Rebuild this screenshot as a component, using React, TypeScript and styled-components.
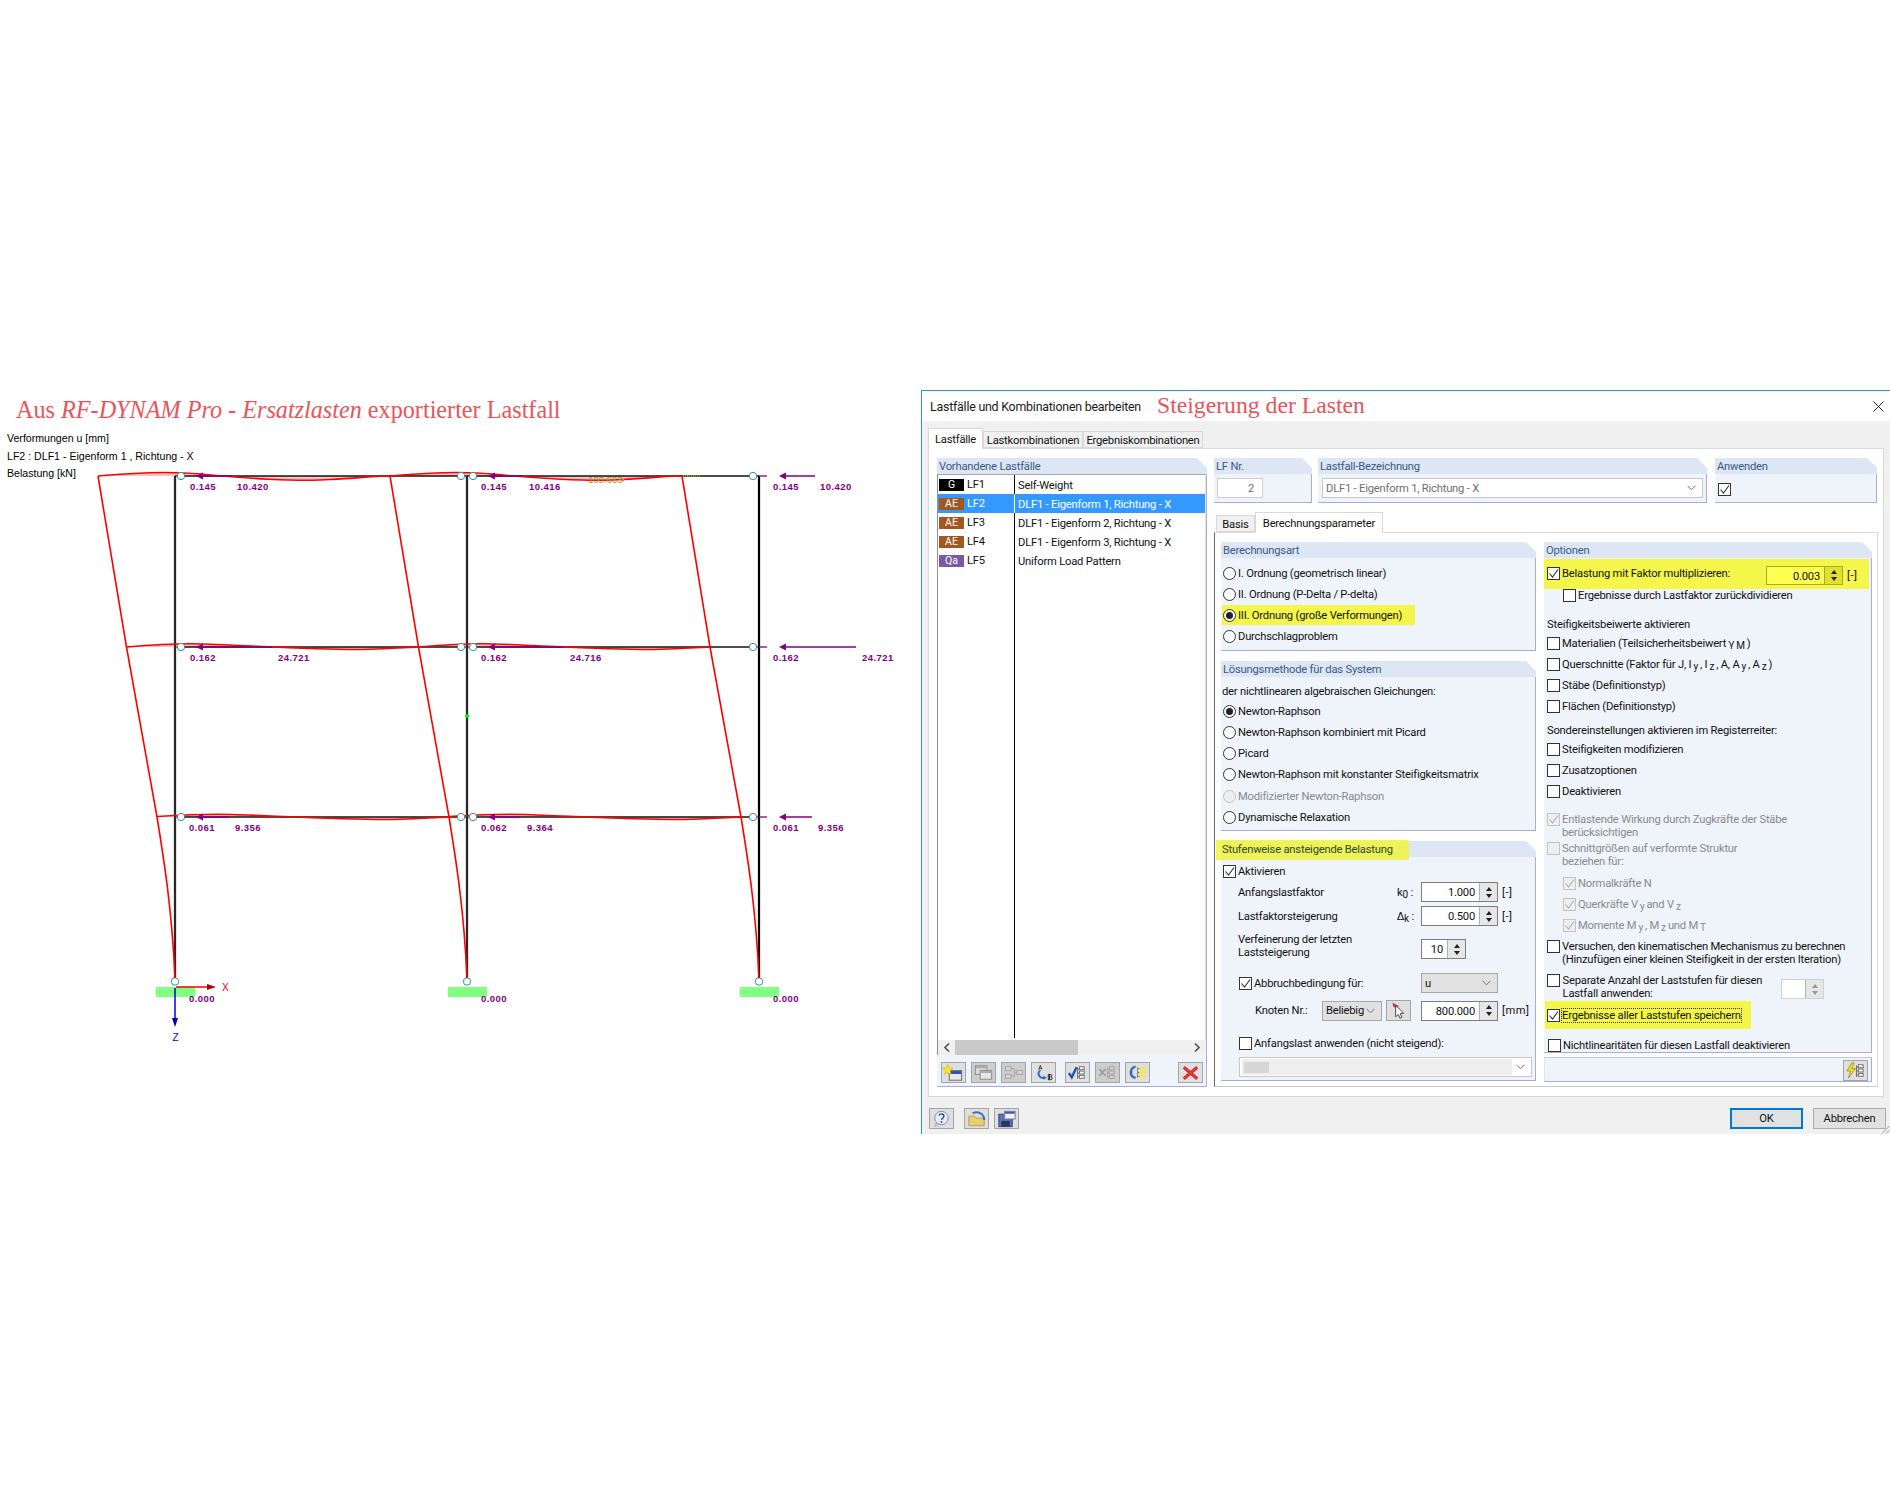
import React from "react";
import styled, { createGlobalStyle } from "styled-components";

const GlobalStyle = createGlobalStyle`
  html, body {
    margin: 0;
    padding: 0;
    background: #ffffff;
  }
`;

const Page = styled.div`
  width: 1890px;
  height: 1510px;
  padding-top: 390px;
  box-sizing: border-box;
  display: flex;
  overflow: hidden;
  background: #ffffff;
`;

/* left: the exported load case */
const DiagramPanel = styled.div`
  position: relative;
  width: 921px;
  height: 744px;
  flex: none;
`;

const DiagramTitle = styled.div`
  position: relative;
  font-family: "Liberation Serif", serif;
  font-size: 24.2px;
  line-height: 28px;
  color: #e8545a;
  padding: 6px 0 0 16px;
  i {
    font-style: italic;
  }
`;

const Legend = styled.div`
  position: relative;
  z-index: 1;
  margin-top: 6px;
  padding-left: 7px;
  font-family: "Liberation Sans", sans-serif;
  font-size: 10.6px;
  line-height: 17.5px;
  color: #000;
`;

const DiagramCanvas = styled.svg`
  position: absolute;
  left: 0;
  top: 0;
`;

/* right: the dialog */
const Dialog = styled.div`
  width: 969px;
  height: 744px;
  flex: none;
  box-sizing: border-box;
  border-top: 1px solid #2a9db5;
  border-left: 1px solid #2a9db5;
  background: #f0f0f0;
  display: flex;
  flex-direction: column;
  position: relative;
  overflow: hidden;
  font-family: "Roboto", "Liberation Sans", sans-serif;
  font-size: 11.2px;
  letter-spacing: -0.2px;
  color: #111;
`;

const TitleBar = styled.div`
  height: 30px;
  flex: none;
  background: #fff;
  display: flex;
  align-items: center;
  padding: 0 6px 0 8px;
`;

const DialogCaption = styled.div`
  font-size: 12.4px;
  letter-spacing: -0.22px;
  color: #1a1a1a;
`;

const CaptionNote = styled.div`
  font-family: "Liberation Serif", serif;
  font-size: 23.7px;
  letter-spacing: 0;
  color: #e8545a;
  margin: -1px 0 0 16px;
`;

const CloseButton = styled.div`
  margin-left: auto;
  display: flex;
`;

const TabRow = styled.div`
  height: 27px;
  flex: none;
  display: flex;
  align-items: flex-end;
  padding-left: 6px;
`;

const MainTab = styled.div<{ $active?: boolean; $w: number }>`
  width: ${(p) => p.$w}px;
  height: ${(p) => (p.$active ? 21 : 17)}px;
  box-sizing: border-box;
  border: 1px solid #d9d9d9;
  border-bottom: ${(p) => (p.$active ? "none" : "1px solid #d9d9d9")};
  background: ${(p) => (p.$active ? "#fff" : "#f0f0f0")};
  margin-bottom: ${(p) => (p.$active ? -1 : 0)}px;
  padding-top: ${(p) => (p.$active ? 0 : 1)}px;
  position: relative;
  z-index: ${(p) => (p.$active ? 2 : 0)};
  display: flex;
  align-items: center;
  justify-content: center;
  line-height: 13px;
`;

const TabPane = styled.div`
  width: 956px;
  height: 649px;
  flex: none;
  margin-left: 6px;
  box-sizing: border-box;
  background: #fff;
  border: 1px solid #d9d9d9;
  padding: 9px 0 0 8px;
  display: flex;
  gap: 7px;
`;

const GroupHeader = styled.div`
  height: 16px;
  flex: none;
  position: relative;
  background: #dce6f4;
  clip-path: polygon(0 0, calc(100% - 10px) 0, 100% 10px, 100% 100%, 0 100%);
  color: #3a5a82;
  padding-left: 2px;
  line-height: 18px;
  white-space: nowrap;
`;

const HeaderWrap = styled.div`
  position: relative;
  flex: none;
`;

const HeaderHighlight = styled.div`
  position: absolute;
  left: -5px;
  top: -1px;
  width: 193px;
  height: 20px;
  background: rgba(240, 245, 60, 0.85);
  color: #2d4a2a;
  line-height: 20px;
  padding-left: 6px;
  box-sizing: border-box;
  white-space: nowrap;
`;

const Group = styled.div<{ $w: number; $h: number; $ml?: number; $mt?: number }>`
  width: ${(p) => p.$w}px;
  height: ${(p) => p.$h}px;
  flex: none;
  margin-left: ${(p) => p.$ml ?? 0}px;
  margin-top: ${(p) => p.$mt ?? 0}px;
  display: flex;
  flex-direction: column;
`;

const GroupBody = styled.div<{ $pt?: number; $pl?: number }>`
  flex: 1;
  min-height: 0;
  box-sizing: border-box;
  background: #eff3fa;
  border-right: 1px solid #a9a9e6;
  border-bottom: 1px solid #a9a9e6;
  padding: ${(p) => p.$pt ?? 0}px 0 0 ${(p) => p.$pl ?? 2}px;
  display: flex;
  flex-direction: column;
`;

const CaseList = styled.div`
  height: 566px;
  flex: none;
  position: relative;
  box-sizing: border-box;
  background: #fff;
  border-left: 1px solid #8f8f8f;
  border-top: 1px solid #a8a8a8;
  border-right: 1px solid #dfe5f0;
  &::before {
    content: "";
    position: absolute;
    left: 76px;
    top: 0;
    bottom: 2px;
    width: 1px;
    background: #000;
  }
`;

const CaseRow = styled.div<{ $selected?: boolean }>`
  height: 19px;
  display: flex;
  align-items: center;
  position: relative;
  background: ${(p) => (p.$selected ? "#3399ff" : "transparent")};
  color: ${(p) => (p.$selected ? "#fff" : "#111")};
`;

const CaseKey = styled.div`
  width: 76px;
  flex: none;
  display: flex;
  align-items: center;
  gap: 3px;
  padding-left: 1px;
  box-sizing: border-box;
  line-height: 21px;
`;

const CaseName = styled.div<{ $selected?: boolean }>`
  padding-left: 3px;
  border-left: 1px solid ${(p) => (p.$selected ? "#fff" : "transparent")};
  height: 19px;
  line-height: 21px;
  white-space: nowrap;
`;

const Badge = styled.span<{ $bg: string }>`
  width: 25px;
  height: 12px;
  background: ${(p) => p.$bg};
  color: #fff;
  font-size: 10.5px;
  letter-spacing: 0;
  line-height: 12px;
  text-align: center;
`;

const ScrollBar = styled.div`
  height: 15px;
  flex: none;
  background: #f0f0f0;
  display: flex;
  align-items: center;
  border-left: 1px solid #8f8f8f;
  margin-right: 1px;
`;

const ScrollArrow = styled.div`
  width: 17px;
  flex: none;
  display: flex;
  justify-content: center;
`;

const ScrollThumb = styled.div`
  width: 123px;
  height: 15px;
  background: #c9c9c9;
`;

const ScrollEnd = styled.div`
  margin-left: auto;
  display: flex;
  width: 17px;
  justify-content: center;
`;

const Toolbar = styled.div`
  flex: 1;
  display: flex;
  align-items: flex-start;
  padding: 7px 0 0 4px;
`;

const ToolButton = styled.div<{ $ml?: number; $off?: boolean }>`
  width: 25px;
  height: 21px;
  flex: none;
  box-sizing: border-box;
  margin-left: ${(p) => p.$ml ?? 0}px;
  border: 1px solid #a4a4a4;
  background: ${(p) => (p.$off ? "#cdcdcd" : "#dfdfdf")};
  display: flex;
  align-items: center;
  justify-content: center;
`;

const RightColumn = styled.div`
  width: 664px;
  flex: none;
  display: flex;
  flex-direction: column;
`;

const HeadRow = styled.div`
  height: 45px;
  flex: none;
  display: flex;
`;

const ValueBox = styled.div<{ $w: number }>`
  width: ${(p) => p.$w}px;
  height: 20px;
  box-sizing: border-box;
  border: 1px solid #cfcfcf;
  background: #fff;
  color: #6f6f6f;
  padding: 0 8px 0 4px;
  display: flex;
  align-items: center;
  justify-content: flex-end;
`;

const ComboBox = styled.div<{ $w: number; $ml?: number; $mt?: number; $tone?: "flat" | "pale" }>`
  width: ${(p) => p.$w}px;
  height: 20px;
  box-sizing: border-box;
  margin-left: ${(p) => p.$ml ?? 0}px;
  margin-top: ${(p) => p.$mt ?? 0}px;
  border: 1px solid ${(p) => (p.$tone === "flat" ? "#a8a8a8" : "#c8c8c8")};
  background: ${(p) => (p.$tone === "flat" ? "#e1e1e1" : "#fff")};
  color: ${(p) => (p.$tone === "flat" ? "#111" : "#6f6f6f")};
  display: flex;
  align-items: center;
  padding: 0 6px 0 3px;
  white-space: nowrap;
  justify-content: space-between;
`;

const ComboFill = styled.div`
  width: 270px;
  height: 16px;
  background: #eeeeee;
  padding-left: 2px;
  box-sizing: border-box;
  display: flex;
  align-items: center;
  margin-left: -1px;
`;

const ComboSwatch = styled.div`
  width: 25px;
  height: 11px;
  background: #d6d6d6;
`;

const SubTabRow = styled.div`
  height: 29px;
  flex: none;
  display: flex;
  align-items: flex-end;
  padding-left: 2px;
`;

const SubPane = styled.div`
  height: 555px;
  flex: none;
  box-sizing: border-box;
  border: 1px solid #d9d9d9;
  border-left-color: #6a6a6a;
  border-bottom-color: #c8c8c8;
  padding: 9px 0 0 6px;
  display: flex;
  gap: 8px;
  background: #fff;
`;

const PaneColumn = styled.div<{ $w: number }>`
  width: ${(p) => p.$w}px;
  flex: none;
  display: flex;
  flex-direction: column;
`;

const Line = styled.div<{ $mt?: number; $indent?: number; $w?: number; $muted?: boolean }>`
  margin-top: ${(p) => p.$mt ?? 0}px;
  margin-left: ${(p) => p.$indent ?? 0}px;
  width: ${(p) => (p.$w ? `${p.$w}px` : "auto")};
  flex: none;
  display: flex;
  align-items: flex-start;
  gap: 2px;
  line-height: 13px;
  white-space: nowrap;
  color: ${(p) => (p.$muted ? "#8a8a8a" : "inherit")};
`;

const Focused = styled.span`
  outline: 1px dotted #222;
  outline-offset: 0;
`;

const Marker = styled.span<{ $dim?: boolean; $round?: boolean }>`
  width: 13px;
  height: 13px;
  flex: none;
  box-sizing: border-box;
  border: 1px solid ${(p) => (p.$dim ? "#c4c4c4" : "#333")};
  border-radius: ${(p) => (p.$round ? "50%" : "0")};
  background: ${(p) => (p.$dim ? "#eeeeee" : "#fff")};
  display: flex;
  align-items: center;
  justify-content: center;
`;

const Dot = styled.span`
  width: 7px;
  height: 7px;
  border-radius: 50%;
  background: #222;
`;

const Spot = styled.div<{ $w: number; $h: number; $pt: number; $mt?: number; $ml: number }>`
  width: ${(p) => p.$w}px;
  height: ${(p) => p.$h}px;
  flex: none;
  box-sizing: border-box;
  margin-top: ${(p) => p.$mt ?? 0}px;
  margin-left: ${(p) => p.$ml}px;
  padding: ${(p) => p.$pt}px 0 0 ${(p) => -p.$ml}px;
  background: #f4f74a;
  display: flex;
  align-items: flex-start;
`;

const FieldRow = styled.div<{ $cols: string; $mt: number; $pl: number; $h?: number }>`
  display: grid;
  grid-template-columns: ${(p) => p.$cols};
  height: ${(p) => p.$h ?? 20}px;
  flex: none;
  margin-top: ${(p) => p.$mt}px;
  padding-left: ${(p) => p.$pl}px;
  align-items: center;
  white-space: nowrap;
  line-height: 13px;
`;

const SpinBox = styled.div<{ $w: number; $tone?: "yellow" | "pale"; $end?: boolean }>`
  width: ${(p) => p.$w}px;
  height: ${(p) => (p.$tone === "yellow" ? 19 : 20)}px;
  box-sizing: border-box;
  border: 1px solid ${(p) => (p.$tone === "yellow" ? "#a8a830" : p.$tone === "pale" ? "#d0d0d0" : "#7d7d7d")};
  background: ${(p) => (p.$tone === "yellow" ? "#ffff50" : "#fff")};
  display: flex;
  align-self: ${(p) => (p.$end ? "end" : "center")};
`;

const SpinValue = styled.div`
  flex: 1;
  text-align: right;
  line-height: 20px;
  padding-right: 4px;
`;

const SpinArrows = styled.div<{ $tone?: "yellow" | "pale" }>`
  width: 17px;
  flex: none;
  display: flex;
  flex-direction: column;
  align-items: center;
  justify-content: center;
  gap: 3px;
  background: ${(p) => (p.$tone === "yellow" ? "#e0e030" : "#e6e6e6")};
  border-left: 1px solid ${(p) => (p.$tone === "yellow" ? "#a8a830" : "#b0b0b0")};
`;

const SpinTip = styled.span<{ $down?: boolean; $pale?: boolean }>`
  width: 0;
  height: 0;
  border-left: 3px solid transparent;
  border-right: 3px solid transparent;
  border-bottom: ${(p) => (p.$down ? "none" : `4px solid ${p.$pale ? "#999" : "#222"}`)};
  border-top: ${(p) => (p.$down ? `4px solid ${p.$pale ? "#999" : "#222"}` : "none")};
`;

const Unit = styled.span`
  padding-left: 4px;
  letter-spacing: 0.5px;
`;

const Low = styled.span`
  font-size: 10px;
  position: relative;
  top: 2px;
`;

const Symbol = styled.span`
  font-family: "DejaVu Sans", sans-serif;
  font-size: 10.5px;
`;

const SideBySide = styled.div`
  display: flex;
  align-items: flex-start;
  width: 325px;
`;

const PaleSpinSlot = styled.div`
  margin: 5px 47px 0 auto;
`;

const ToolStrip = styled.div`
  height: 25px;
  flex: none;
  margin-top: 4px;
  box-sizing: border-box;
  background: #eff3fa;
  border: 1px solid #c6c6ee;
  border-left-color: #dfe5f0;
  border-bottom-color: #a9a9e6;
  border-right-color: #a9a9e6;
  display: flex;
  justify-content: flex-end;
  padding: 2px 3px 0 0;
`;

const Footer = styled.div`
  flex: 1;
  display: flex;
  align-items: flex-start;
  padding: 11px 4px 0 7px;
`;

const CommandButton = styled.div<{ $primary?: boolean; $ml?: number; $auto?: boolean }>`
  width: 73px;
  height: 21px;
  box-sizing: border-box;
  margin-left: ${(p) => (p.$auto ? "auto" : `${p.$ml ?? 0}px`)};
  border: ${(p) => (p.$primary ? "2px solid #0078d7" : "1px solid #adadad")};
  background: #e1e1e1;
  display: flex;
  align-items: center;
  justify-content: center;
`;

const Grip = styled.svg`
  position: absolute;
  right: 0;
  bottom: 0;
`;

const FactorField = styled.div`
  display: flex;
  align-items: center;
  margin-top: -1px;
  line-height: 18px;
`;

const DIAGRAM_RED = "#ff0000";
const PURPLE = "#800080";

const levels = [
  {
    y: 476,
    nodes: [98, 390, 682],
    curve: (x: number) =>
      `M${x},476 C${x + 32},473 ${x + 72},471 ${x + 102},474 C${x + 142},478 ${x + 202},482 ${x + 232},479.5 C${x + 262},478 ${x + 277},476 ${x + 292},476`,
  },
  {
    y: 647,
    nodes: [126.5, 418.5, 710],
    curve: (x: number) =>
      `M${x},647 C${x + 25},645 ${x + 50},643 ${x + 75},644 C${x + 115},645 ${x + 190},650 ${x + 235},649.5 C${x + 260},649 ${x + 275},647.5 ${x + 292},647`,
  },
  {
    y: 817,
    nodes: [157, 449, 741],
    curve: (x: number) =>
      `M${x},816.5 C${x + 25},815 ${x + 50},813.5 ${x + 75},814.5 C${x + 120},816 ${x + 190},820 ${x + 235},819.5 C${x + 260},819 ${x + 275},817.5 ${x + 292},817`,
  },
];

const columns = [175, 467, 759];

const loads = [
  { y: 490, arrowY: 476, items: [
    { head: 196, end: 232, a: "0.145", ax: 190, b: "10.420", bx: 237 },
    { head: 488, end: 523, a: "0.145", ax: 481, b: "10.416", bx: 529 },
    { head: 779, end: 815, a: "0.145", ax: 773, b: "10.420", bx: 820 },
  ] },
  { y: 661, arrowY: 647, items: [
    { head: 196, end: 272, a: "0.162", ax: 190, b: "24.721", bx: 278 },
    { head: 488, end: 563, a: "0.162", ax: 481, b: "24.716", bx: 570 },
    { head: 779, end: 856, a: "0.162", ax: 773, b: "24.721", bx: 862 },
  ] },
  { y: 831, arrowY: 817, items: [
    { head: 196, end: 229, a: "0.061", ax: 189, b: "9.356", bx: 235 },
    { head: 488, end: 520, a: "0.062", ax: 481, b: "9.364", bx: 527 },
    { head: 779, end: 812, a: "0.061", ax: 773, b: "9.356", bx: 818 },
  ] },
];

const LoadLabel = styled.text`
  font-family: "Liberation Sans", sans-serif;
  font-size: 9.5px;
  font-weight: 700;
  letter-spacing: 0.45px;
  fill: ${PURPLE};
`;

const AxisLabel = styled.text<{ $color: string }>`
  font-family: "Liberation Sans", sans-serif;
  font-size: 10px;
  fill: ${(p) => p.$color};
`;

const FaintLabel = styled.text`
  font-family: "Liberation Sans", sans-serif;
  font-size: 9.5px;
  fill: #9a9a20;
`;

const Diagram = () => (
  <DiagramCanvas width="921" height="744" viewBox="0 390 921 744">
    {levels.map((level) =>
      [0, 1].map((bay) => (
        <path key={`f${level.y}${bay}`} d={level.curve(level.nodes[bay])} fill="#f6c4c4" stroke="none" />
      ))
    )}
    {levels.map((level) => (
      <line key={level.y} x1="175" x2="759" y1={level.y} y2={level.y} stroke="#111" strokeWidth="1.6" />
    ))}
    {columns.map((x, i) => (
      <g key={x}>
        <line x1={x} x2={x} y1="476" y2="982" stroke="#c4c4c4" strokeWidth="3" />
        <line x1={x} x2={x} y1="476" y2="982" stroke="#000" strokeWidth={i === 2 ? 2 : 1.6} />
        <rect x={x - 19} y="987" width="39" height="10" fill="#80ff80" />
        <circle cx={x} cy="981.5" r="3.7" fill="#fff" stroke="#3f9090" strokeWidth="1" />
      </g>
    ))}
    {levels.map((level) =>
      [0, 1].map((bay) => (
        <path key={`c${level.y}${bay}`} d={level.curve(level.nodes[bay])} fill="none" stroke={DIAGRAM_RED} strokeWidth="1.6" />
      ))
    )}
    {columns.map((x, i) => (
      <path
        key={`d${x}`}
        d={`M${levels[0].nodes[i]},476 L${levels[1].nodes[i]},647 L${levels[2].nodes[i]},817 C${levels[2].nodes[i] + 7},860 ${x - 3},910 ${x},978`}
        fill="none"
        stroke={DIAGRAM_RED}
        strokeWidth="1.6"
      />
    ))}
    {loads.map((row) =>
      row.items.map((item) => (
        <g key={`${row.y}${item.head}`}>
          <line x1={item.head + 4} x2={item.end} y1={row.arrowY} y2={row.arrowY} stroke={PURPLE} strokeWidth="1.5" />
          <polygon points={`${item.head},${row.arrowY} ${item.head + 7},${row.arrowY - 3.5} ${item.head + 7},${row.arrowY + 3.5}`} fill={PURPLE} />
          {item.head === 779 && (
            <line x1="759" x2="767" y1={row.arrowY} y2={row.arrowY} stroke={PURPLE} strokeWidth="1.3" />
          )}
          <LoadLabel x={item.ax} y={row.y}>{item.a}</LoadLabel>
          <LoadLabel x={item.bx} y={row.y}>{item.b}</LoadLabel>
        </g>
      ))
    )}
    {levels.map((level) =>
      [181, 461, 473, 753].map((x) => (
        <circle key={`${level.y}${x}`} cx={x} cy={level.y} r="3.7" fill="#fff" stroke="#3f9090" strokeWidth="1" />
      ))
    )}
    <circle cx="467" cy="716" r="2" fill="#00ee00" />
    <FaintLabel x="588" y="483">100.663</FaintLabel>
    <circle cx="623" cy="480" r="1.3" fill="#f07020" />
    <line x1="683" x2="701" y1="476" y2="476" stroke="#a0a020" strokeWidth="1.4" strokeDasharray="1 1" />
    {[189, 481, 773].map((x) => (
      <LoadLabel key={x} x={x} y="1002">0.000</LoadLabel>
    ))}
    <line x1="176" x2="210" y1="987" y2="987" stroke="#f00000" strokeWidth="1.5" />
    <polygon points="216,987 207,984 207,990" fill="#b00000" />
    <AxisLabel x="222" y="991" $color="#e00000">X</AxisLabel>
    <line x1="175" x2="175" y1="988" y2="1022" stroke="#0000e0" strokeWidth="1.5" />
    <polygon points="175,1027 172,1018 178,1018" fill="#0000b0" />
    <AxisLabel x="172.5" y="1041" $color="#0000e0">Z</AxisLabel>
  </DiagramCanvas>
);

const Check = ({ dim }: { dim?: boolean }) => (
  <svg width="11" height="11" viewBox="0 0 11 11">
    <path d="M1.5 5.5 L4.5 9 L10 1.5" fill="none" stroke={dim ? "#b0b0b0" : "#333"} strokeWidth="1.1" />
  </svg>
);

const Box = ({ on, dim }: { on?: boolean; dim?: boolean }) => (
  <Marker $dim={dim}>{on && <Check dim={dim} />}</Marker>
);

const Radio = ({ on, dim }: { on?: boolean; dim?: boolean }) => (
  <Marker $round $dim={dim}>{on && <Dot />}</Marker>
);

const Chevron = () => (
  <svg width="9" height="6" viewBox="0 0 9 6">
    <path d="M0.5 0.8 L4.5 4.8 L8.5 0.8" fill="none" stroke="#707070" strokeWidth="1" />
  </svg>
);

const Spin = ({ w, value, tone, end }: { w: number; value?: string; tone?: "yellow" | "pale"; end?: boolean }) => (
  <SpinBox $w={w} $tone={tone} $end={end}>
    <SpinValue>{value}</SpinValue>
    <SpinArrows $tone={tone}>
      <SpinTip $pale={tone === "pale"} />
      <SpinTip $down $pale={tone === "pale"} />
    </SpinArrows>
  </SpinBox>
);

const TreeList = ({ x = 12, color = "#6d6d6d", fill = "#fff" }: { x?: number; color?: string; fill?: string }) => (
  <g stroke={color} strokeWidth="1" fill={fill}>
    <path d={`M${x + 1} 3 V15 M${x + 1} 5 H${x + 3} M${x + 1} 9 H${x + 3} M${x + 1} 13 H${x + 3}`} fill="none" />
    <rect x={x + 3} y="2.5" width="5" height="3" />
    <rect x={x + 3} y="7" width="5" height="3" />
    <rect x={x + 3} y="11.5" width="5" height="3" />
  </g>
);

const icons: Record<string, React.ReactNode> = {
  add: (
    <>
      <rect x="7.5" y="6.5" width="13" height="10" fill="#e8e8e8" stroke="#666" />
      <rect x="8" y="7" width="12" height="3" fill="#2050c0" />
      <path d="M6 0 L7.6 3.6 L11.5 4 L8.6 6.6 L9.4 10.4 L6 8.4 L2.6 10.4 L3.4 6.6 L0.5 4 L4.4 3.6 Z" fill="#ffe820" stroke="#c8a000" strokeWidth="0.5" />
    </>
  ),
  copy: (
    <>
      <rect x="3.5" y="1.5" width="12" height="9" fill="#d8d8d8" stroke="#8a8a8a" />
      <rect x="4" y="2" width="11" height="2" fill="#a8a8a8" />
      <rect x="8.5" y="6.5" width="12" height="9" fill="#e6e6e6" stroke="#8a8a8a" />
      <rect x="9" y="7" width="11" height="2" fill="#a8a8a8" />
    </>
  ),
  group: (
    <g fill="#d8d8d8" stroke="#a4a4a4">
      <rect x="3.5" y="2.5" width="6" height="4" />
      <rect x="3.5" y="10.5" width="6" height="4" />
      <rect x="15.5" y="6.5" width="6" height="4" />
      <path d="M9.5 4.5 H13 V12.5 H9.5 M13 8.5 H15.5" fill="none" />
    </g>
  ),
  rename: (
    <>
      <path d="M7 5.5 L8.7 1 L10.4 5.5 M7.6 4 H9.8" fill="none" stroke="#333" strokeWidth="0.9" />
      <path d="M8.7 6 C5 9 7 15 13 14" fill="none" stroke="#2e6fc4" strokeWidth="2" />
      <path d="M12 11.5 L15.5 14 L12 16 Z" fill="#2e6fc4" />
      <path d="M17 10.5 H19.5 C21 10.5 21 13 19.5 13 C21.5 13 21.5 16 19.5 16 H17 Z M18.3 10.5 V16" fill="none" stroke="#222" strokeWidth="1" />
    </>
  ),
  tick: (
    <>
      <path d="M3 9 L6 13.5 L11 3" fill="none" stroke="#2050c0" strokeWidth="2.4" />
      <TreeList x={11} />
    </>
  ),
  cross: (
    <>
      <path d="M3.5 5 L10 12 M10 5 L3.5 12" stroke="#a0a0a0" strokeWidth="2" />
      <TreeList x={11} color="#a4a4a4" fill="#d4d4d4" />
    </>
  ),
  brace: (
    <>
      <path d="M10 2.5 C4 3 3 13 10 14" fill="none" stroke="#2e6fc4" strokeWidth="2.6" />
      <path d="M12 3 V14 M12 4.5 H20 M12 8.5 H20 M12 12.5 H20" fill="none" stroke="#6d6d6d" strokeWidth="0.8" />
      <rect x="14" y="3" width="6" height="2.6" fill="#ffe838" />
      <rect x="14" y="7.2" width="6" height="2.6" fill="#ffe838" />
      <rect x="14" y="11.4" width="6" height="2.6" fill="#ffe838" />
    </>
  ),
  remove: (
    <>
      <path d="M5 3 L19 15 M19 3 L5 15" stroke="#d82020" strokeWidth="3.2" />
      <path d="M5 3 L19 15 M19 3 L5 15" stroke="#ff6060" strokeWidth="0.7" />
    </>
  ),
  help: (
    <>
      <circle cx="12" cy="8" r="7" fill="#e8eef8" stroke="#7f8da8" />
      <path d="M6 13 L5 17 L10 14.5 Z" fill="#c8d0e0" stroke="#7f8da8" strokeWidth="0.5" />
      <path d="M9.5 5.5 C10 3 14.5 3 14.5 6 C14.5 8 12.3 8 12 10" fill="none" stroke="#2a4f96" strokeWidth="1.5" />
      <circle cx="12" cy="12.2" r="1" fill="#2a4f96" />
    </>
  ),
  open: (
    <>
      <path d="M4 6 H10 L12 8 H20 V16 H4 Z" fill="#e8cd72" stroke="#a08a40" strokeWidth="0.7" />
      <path d="M8 3 C14 0 20 4 20 10" fill="none" stroke="#3a74c0" strokeWidth="2.2" />
    </>
  ),
  save: (
    <>
      <rect x="4" y="4" width="14" height="13" fill="#5a74b8" stroke="#33477c" />
      <rect x="6.5" y="11" width="9" height="6" fill="#26365e" />
      <rect x="10" y="1" width="11" height="8" fill="#f2f2f2" stroke="#6d7aa0" />
      <rect x="10.5" y="1.5" width="10" height="2" fill="#3a5ab0" />
    </>
  ),
  bolt: (
    <>
      <path d="M8 0.5 L3 9 H7 L4.5 16.5 L12 6.5 H8 L10.5 0.5 Z" fill="#f2e020" stroke="#8a8010" strokeWidth="0.7" />
      <TreeList x={12} />
    </>
  ),
  pick: (
    <>
      <path d="M6 1 L12 4 L9.5 5.5 L7 4.5 Z" fill="#e03030" stroke="#a02020" strokeWidth="0.5" />
      <path d="M9 3 L9 15 L11.8 12.6 L13.6 16.6 L15.6 15.6 L13.8 11.8 L17.4 11.4 Z" fill="#fff" stroke="#333" strokeWidth="0.9" />
    </>
  ),
};

const Glyph = ({ name }: { name: string }) => (
  <svg width="23" height="18" viewBox="0 0 24 18">{icons[name]}</svg>
);

const cases = [
  { badge: "G", color: "#000000", id: "LF1", name: "Self-Weight" },
  { badge: "AE", color: "#a4561f", id: "LF2", name: "DLF1 - Eigenform 1, Richtung - X", selected: true },
  { badge: "AE", color: "#a4561f", id: "LF3", name: "DLF1 - Eigenform 2, Richtung - X" },
  { badge: "AE", color: "#a4561f", id: "LF4", name: "DLF1 - Eigenform 3, Richtung - X" },
  { badge: "Qa", color: "#7b58a8", id: "LF5", name: "Uniform Load Pattern" },
];

const tools = [
  { icon: "add" },
  { icon: "copy", ml: 5, off: true },
  { icon: "group", ml: 5, off: true },
  { icon: "rename", ml: 5 },
  { icon: "tick", ml: 9 },
  { icon: "cross", ml: 5, off: true },
  { icon: "brace", ml: 5 },
  { icon: "remove", ml: 28 },
];

const App = () => (
  <>
    <GlobalStyle />
    <Page>
      <DiagramPanel>
        <Diagram />
        <DiagramTitle>
          Aus <i>RF-DYNAM Pro - Ersatzlasten</i> exportierter Lastfall
        </DiagramTitle>
        <Legend>
          <div>Verformungen u [mm]</div>
          <div>LF2 : DLF1 - Eigenform 1 , Richtung - X</div>
          <div>Belastung [kN]</div>
        </Legend>
      </DiagramPanel>

      <Dialog>
        <TitleBar>
          <DialogCaption>Lastfälle und Kombinationen bearbeiten</DialogCaption>
          <CaptionNote>Steigerung der Lasten</CaptionNote>
          <CloseButton>
            <svg width="11" height="11" viewBox="0 0 11 11">
              <path d="M0.5 0.5 L10.5 10.5 M10.5 0.5 L0.5 10.5" stroke="#222" strokeWidth="1" />
            </svg>
          </CloseButton>
        </TitleBar>

        <TabRow>
          <MainTab $active $w={55}>Lastfälle</MainTab>
          <MainTab $w={100}>Lastkombinationen</MainTab>
          <MainTab $w={120}>Ergebniskombinationen</MainTab>
        </TabRow>

        <TabPane>
          <Group $w={270} $h={629}>
            <GroupHeader>Vorhandene Lastfälle</GroupHeader>
            <GroupBody $pl={0}>
              <CaseList>
                {cases.map((c) => (
                  <CaseRow key={c.id} $selected={c.selected}>
                    <CaseKey>
                      <Badge $bg={c.color}>{c.badge}</Badge>
                      {c.id}
                    </CaseKey>
                    <CaseName $selected={c.selected}>{c.name}</CaseName>
                  </CaseRow>
                ))}
              </CaseList>
              <ScrollBar>
                <ScrollArrow>
                  <svg width="6" height="9" viewBox="0 0 6 9"><path d="M5 0.5 L1 4.5 L5 8.5" fill="none" stroke="#555" strokeWidth="1.6" /></svg>
                </ScrollArrow>
                <ScrollThumb />
                <ScrollEnd>
                  <svg width="6" height="9" viewBox="0 0 6 9"><path d="M1 0.5 L5 4.5 L1 8.5" fill="none" stroke="#555" strokeWidth="1.6" /></svg>
                </ScrollEnd>
              </ScrollBar>
              <Toolbar>
                {tools.map((t) => (
                  <ToolButton key={t.icon} $ml={t.ml} $off={t.off}>
                    <Glyph name={t.icon} />
                  </ToolButton>
                ))}
              </Toolbar>
            </GroupBody>
          </Group>

          <RightColumn>
            <HeadRow>
              <Group $w={98} $h={45}>
                <GroupHeader>LF Nr.</GroupHeader>
                <GroupBody $pt={4} $pl={3}>
                  <ValueBox $w={46}>2</ValueBox>
                </GroupBody>
              </Group>
              <Group $w={389} $h={45} $ml={6}>
                <GroupHeader>Lastfall-Bezeichnung</GroupHeader>
                <GroupBody $pt={4} $pl={4}>
                  <ComboBox $w={381}>
                    DLF1 - Eigenform 1, Richtung - X
                    <Chevron />
                  </ComboBox>
                </GroupBody>
              </Group>
              <Group $w={162} $h={45} $ml={8}>
                <GroupHeader>Anwenden</GroupHeader>
                <GroupBody $pt={9} $pl={3}>
                  <Box on />
                </GroupBody>
              </Group>
            </HeadRow>

            <SubTabRow>
              <MainTab $w={39}>Basis</MainTab>
              <MainTab $active $w={128}>Berechnungsparameter</MainTab>
            </SubTabRow>

            <SubPane>
              <PaneColumn $w={315}>
                <Group $w={315} $h={109}>
                  <GroupHeader>Berechnungsart</GroupHeader>
                  <GroupBody $pt={9}>
                    <Line><Radio /> I. Ordnung (geometrisch linear)</Line>
                    <Line $mt={8}><Radio /> II. Ordnung (P-Delta / P-delta)</Line>
                    <Spot $w={193} $h={20} $pt={4} $mt={4} $ml={-1}>
                      <Line><Radio on /> III. Ordnung (große Verformungen)</Line>
                    </Spot>
                    <Line $mt={5}><Radio /> Durchschlagproblem</Line>
                  </GroupBody>
                </Group>

                <Group $w={315} $h={170} $mt={10}>
                  <GroupHeader>Lösungsmethode für das System</GroupHeader>
                  <GroupBody $pt={8} $pl={1}>
                    <Line>der nichtlinearen algebraischen Gleichungen:</Line>
                    <Line $mt={7} $indent={1}><Radio on /> Newton-Raphson</Line>
                    <Line $mt={8} $indent={1}><Radio /> Newton-Raphson kombiniert mit Picard</Line>
                    <Line $mt={8} $indent={1}><Radio /> Picard</Line>
                    <Line $mt={8} $indent={1}><Radio /> Newton-Raphson mit konstanter Steifigkeitsmatrix</Line>
                    <Line $mt={9} $indent={1} $muted><Radio dim /> Modifizierter Newton-Raphson</Line>
                    <Line $mt={8} $indent={1}><Radio /> Dynamische Relaxation</Line>
                  </GroupBody>
                </Group>

                <Group $w={315} $h={240} $mt={10}>
                  <HeaderWrap>
                    <GroupHeader />
                    <HeaderHighlight>Stufenweise ansteigende Belastung</HeaderHighlight>
                  </HeaderWrap>
                  <GroupBody $pt={8}>
                    <Line><Box on /> Aktivieren</Line>
                    <FieldRow $cols="159px 24px 77px auto" $mt={4} $pl={15}>
                      <span>Anfangslastfaktor</span>
                      <span>k<Low>0</Low> :</span>
                      <Spin w={77} value="1.000" />
                      <Unit>[-]</Unit>
                    </FieldRow>
                    <FieldRow $cols="159px 24px 77px auto" $mt={4} $pl={15}>
                      <span>Lastfaktorsteigerung</span>
                      <span><Symbol>Δ</Symbol><Low>k</Low> :</span>
                      <Spin w={77} value="0.500" />
                      <Unit>[-]</Unit>
                    </FieldRow>
                    <FieldRow $cols="183px 45px" $mt={6} $pl={15} $h={27}>
                      <span>Verfeinerung der letzten<br />Laststeigerung</span>
                      <Spin w={45} value="10" end />
                    </FieldRow>
                    <FieldRow $cols="182px 77px" $mt={14} $pl={16}>
                      <Line><Box on /> Abbruchbedingung für:</Line>
                      <ComboBox $w={77} $tone="flat">u <Chevron /></ComboBox>
                    </FieldRow>
                    <FieldRow $cols="67px 60px 4px 25px 10px 77px auto" $mt={7} $pl={32} $h={21}>
                      <span>Knoten Nr.:</span>
                      <ComboBox $w={60} $tone="flat">Beliebig <Chevron /></ComboBox>
                      <span />
                      <ToolButton><Glyph name="pick" /></ToolButton>
                      <span />
                      <Spin w={77} value="800.000" />
                      <Unit>[mm]</Unit>
                    </FieldRow>
                    <Line $mt={16} $indent={16}><Box /> Anfangslast anwenden (nicht steigend):</Line>
                    <ComboBox $w={293} $ml={16} $mt={7}>
                      <ComboFill><ComboSwatch /></ComboFill>
                      <Chevron />
                    </ComboBox>
                  </GroupBody>
                </Group>
              </PaneColumn>

              <PaneColumn $w={328}>
                <Group $w={328} $h={511}>
                  <GroupHeader>Optionen</GroupHeader>
                  <GroupBody $pt={1} $pl={3}>
                    <Spot $w={325} $h={30} $pt={8} $ml={-3}>
                      <Line $w={219}><Box on /> Belastung mit Faktor multiplizieren:</Line>
                      <FactorField>
                        <Spin w={77} value="0.003" tone="yellow" />
                        <Unit>[-]</Unit>
                      </FactorField>
                    </Spot>
                    <Line $indent={16}><Box /> Ergebnisse durch Lastfaktor zurückdividieren</Line>
                    <Line $mt={16}>Steifigkeitsbeiwerte aktivieren</Line>
                    <Line $mt={6}><Box /> Materialien (Teilsicherheitsbeiwert <Symbol>γ</Symbol><Low>M</Low>)</Line>
                    <Line $mt={8}><Box /> Querschnitte (Faktor für J, I<Low>y</Low>, I<Low>z</Low>, A, A<Low>y</Low>, A<Low>z</Low>)</Line>
                    <Line $mt={8}><Box /> Stäbe (Definitionstyp)</Line>
                    <Line $mt={8}><Box /> Flächen (Definitionstyp)</Line>
                    <Line $mt={11}>Sondereinstellungen aktivieren im Registerreiter:</Line>
                    <Line $mt={6}><Box /> Steifigkeiten modifizieren</Line>
                    <Line $mt={8}><Box /> Zusatzoptionen</Line>
                    <Line $mt={8}><Box /> Deaktivieren</Line>
                    <Line $mt={15} $muted><Box on dim /> <span>Entlastende Wirkung durch Zugkräfte der Stäbe<br />berücksichtigen</span></Line>
                    <Line $mt={3} $muted><Box dim /> <span>Schnittgrößen auf verformte Struktur<br />beziehen für:</span></Line>
                    <Line $mt={9} $indent={16} $muted><Box on dim /> Normalkräfte N</Line>
                    <Line $mt={8} $indent={16} $muted><Box on dim /> Querkräfte V<Low>y</Low> and V<Low>z</Low></Line>
                    <Line $mt={8} $indent={16} $muted><Box on dim /> Momente M<Low>y</Low>, M<Low>z</Low> und M<Low>T</Low></Line>
                    <Line $mt={8}><Box /> <span>Versuchen, den kinematischen Mechanismus zu berechnen<br />(Hinzufügen einer kleinen Steifigkeit in der ersten Iteration)</span></Line>
                    <Line $mt={8}>
                      <SideBySide>
                        <Box />
                        <span>&nbsp;Separate Anzahl der Laststufen für diesen<br />&nbsp;Lastfall anwenden:</span>
                        <PaleSpinSlot><Spin w={43} tone="pale" /></PaleSpinSlot>
                      </SideBySide>
                    </Line>
                    <Spot $w={206} $h={28} $pt={8} $mt={1} $ml={-2}>
                      <Line><Box on /> <Focused>Ergebnisse aller Laststufen speichern</Focused></Line>
                    </Spot>
                    <Line $mt={10} $indent={1}><Box /> Nichtlinearitäten für diesen Lastfall deaktivieren</Line>
                  </GroupBody>
                </Group>
                <ToolStrip>
                  <ToolButton><Glyph name="bolt" /></ToolButton>
                </ToolStrip>
              </PaneColumn>
            </SubPane>
          </RightColumn>
        </TabPane>

        <Footer>
          <ToolButton><Glyph name="help" /></ToolButton>
          <ToolButton $ml={10}><Glyph name="open" /></ToolButton>
          <ToolButton $ml={5}><Glyph name="save" /></ToolButton>
          <CommandButton $primary $auto>OK</CommandButton>
          <CommandButton $ml={10}>Abbrechen</CommandButton>
        </Footer>
        <Grip width="10" height="10" viewBox="0 0 10 10">
          <path d="M9.5 2 L2 9.5 M9.5 6 L6 9.5" stroke="#a0a0a0" strokeWidth="1" />
        </Grip>
      </Dialog>
    </Page>
  </>
);

export default App;
